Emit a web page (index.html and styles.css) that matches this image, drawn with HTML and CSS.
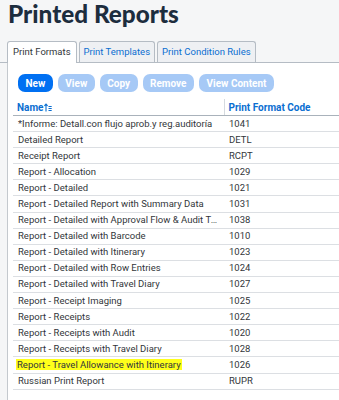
FILE: index.html
```html
<!DOCTYPE html>
<html>
<head>
<meta charset="utf-8">
<link rel="stylesheet" href="styles.css">
</head>
<body>
<h1 class="title">Printed Reports</h1>
<div class="tabs">
  <div class="tab active">Print Formats</div>
  <div class="tab">Print Templates</div>
  <div class="tab">Print Condition Rules</div>
</div>
<div class="panel">
  <div class="toolbar">
    <button class="btn primary">New</button>
    <button class="btn disabled">View</button>
    <button class="btn disabled">Copy</button>
    <button class="btn disabled">Remove</button>
    <button class="btn disabled">View Content</button>
  </div>
  <table class="grid">
    <colgroup><col class="c1"><col class="c2"></colgroup>
    <thead>
      <tr>
        <th class="h-name">Name<svg class="sort" width="8" height="9" viewBox="0 0 8 9"><path d="M2 8.5V1.2M0.4 2.8L2 1 3.6 2.8" fill="none" stroke="#0a6ed1" stroke-width="1.1"/><path d="M4.5 3.5h3.2M4.5 5.5h3.2M4.5 7.5h3.2" stroke="#0a6ed1" stroke-width="1"/></svg></th>
        <th class="h-code">Print Format Code</th>
      </tr>
    </thead>
    <tbody>
      <tr><td>*Informe: Detall.con flujo aprob.y reg.auditoría</td><td>1041</td></tr>
      <tr><td>Detailed Report</td><td>DETL</td></tr>
      <tr><td>Receipt Report</td><td>RCPT</td></tr>
      <tr><td>Report - Allocation</td><td>1029</td></tr>
      <tr><td>Report - Detailed</td><td>1021</td></tr>
      <tr><td>Report - Detailed Report with Summary Data</td><td>1031</td></tr>
      <tr><td>Report - Detailed with Approval Flow &amp; Audit Trail</td><td>1038</td></tr>
      <tr><td>Report - Detailed with Barcode</td><td>1010</td></tr>
      <tr><td>Report - Detailed with Itinerary</td><td>1023</td></tr>
      <tr><td>Report - Detailed with Row Entries</td><td>1024</td></tr>
      <tr><td>Report - Detailed with Travel Diary</td><td>1027</td></tr>
      <tr><td>Report - Receipt Imaging</td><td>1025</td></tr>
      <tr><td>Report - Receipts</td><td>1022</td></tr>
      <tr><td>Report - Receipts with Audit</td><td>1020</td></tr>
      <tr><td>Report - Receipts with Travel Diary</td><td>1028</td></tr>
      <tr><td><span class="mark">Report - Travel Allowance with Itinerary</span></td><td>1026</td></tr>
      <tr><td>Russian Print Report</td><td>RUPR</td></tr>
    </tbody>
  </table>
</div>
</body>
</html>
```
FILE: styles.css
```css
html, body {
  margin: 0;
  padding: 0;
  background: #f5f6f7;
  font-family: Roboto, "Liberation Sans", sans-serif;
  overflow: hidden;
}
.title {
  margin: 0;
  padding-left: 8px;
  font-family: Lato, Inter, "Liberation Sans", sans-serif;
  font-weight: 900;
  font-size: 24.3px;
  line-height: 28px;
  color: #1d2d3e;
}
.tabs {
  display: flex;
  gap: 2px;
  margin-top: 13px;
  padding-left: 7px;
  border-bottom: 1px solid #b5bcc4;
}
.tab {
  height: 20px;
  line-height: 20px;
  padding: 0 4px;
  font-size: 9.5px;
  color: #0a6ed1;
  background: #eef0f3;
  border: 1px solid #b5bcc4;
  border-bottom: none;
  border-radius: 3px 3px 0 0;
  white-space: nowrap;
}
.tab.active {
  color: #32363a;
  background: #fff;
  padding: 0 5px;
  height: 21px;
  margin-bottom: -1px;
}
.panel {
  margin-left: 7px;
  background: #fff;
  border-left: 1px solid #c4c9ce;
  padding: 11px 0 20px 5px;
}
.toolbar {
  display: flex;
  gap: 5px;
  margin-left: 5px;
}
.btn {
  height: 18px;
  padding: 0 7.5px;
  border: none;
  border-radius: 7px;
  font-family: Roboto, "Liberation Sans", sans-serif;
  font-weight: 700;
  font-size: 10px;
  color: #fff;
}
.btn.primary { background: #0070f2; }
.btn.disabled { background: #a6c9f6; }
.grid {
  margin-top: 7px;
  border-collapse: collapse;
  table-layout: fixed;
  width: 340px;
  font-size: 9.5px;
  color: #32363a;
}
.c1 { width: 211px; }
.grid th {
  height: 16px;
  padding: 0 4px 0 4px;
  text-align: left;
  font-weight: 700;
  font-size: 10px;
  color: #0a6ed1;
  border-bottom: 1px solid #a9b2bb;
  vertical-align: middle;
  white-space: nowrap;
}
.grid th.h-code {
  border-left: 1px solid #d5dadf;
}
.sort {
  margin-left: 1px;
  vertical-align: -1px;
}
.grid td {
  height: 15.1px;
  padding: 0 4px 0 5px;
  border-bottom: 1px solid #dcdfe3;
  white-space: nowrap;
  overflow: hidden;
  text-overflow: ellipsis;
  line-height: 14px;
}
.grid td + td { padding-left: 5px; }
.mark {
  background: #ffff1a;
  padding: 0 1px;
  margin-left: -2px;
}
```
